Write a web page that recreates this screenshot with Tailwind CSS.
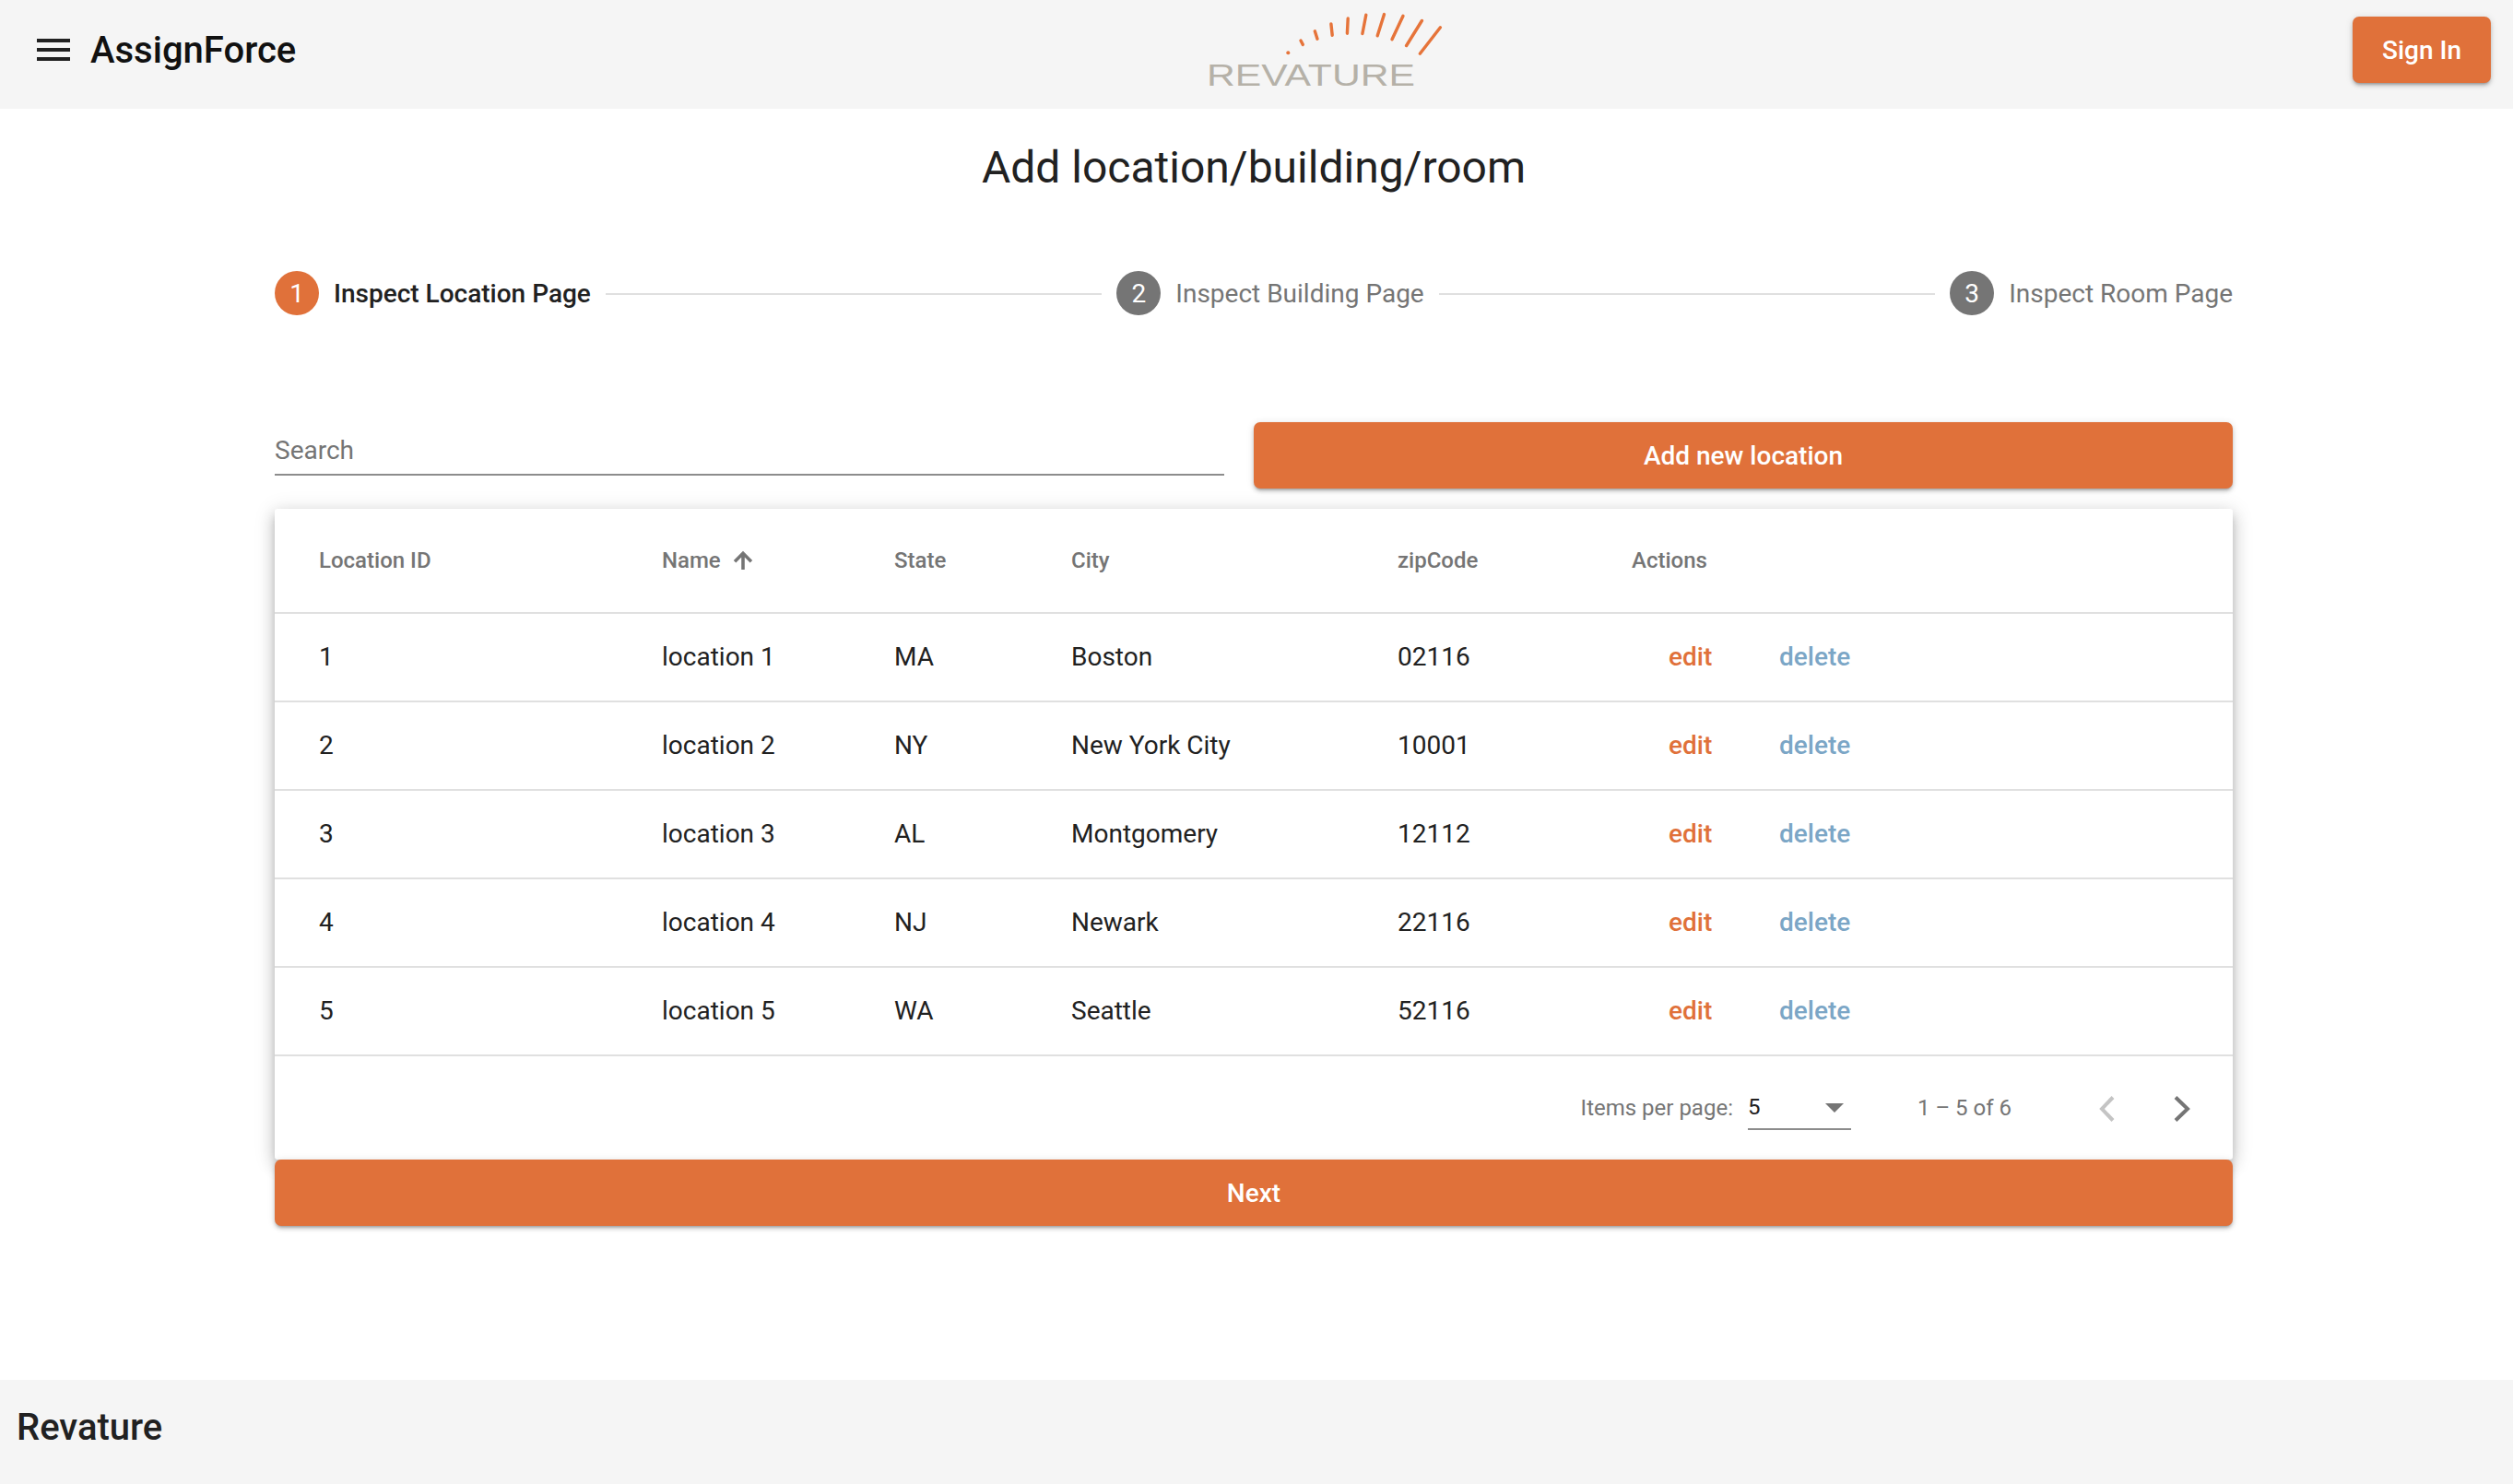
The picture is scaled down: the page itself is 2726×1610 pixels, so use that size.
<!DOCTYPE html>
<html lang="en">
<head>
    <meta charset="UTF-8">
    <meta name="viewport" content="width=device-width, initial-scale=1.0">
    <title>AssignForce</title>
    <script src="https://cdn.jsdelivr.net/npm/@tailwindcss/browser@4"></script>
</head>
<body class="bg-white font-['Roboto',sans-serif] text-[#212121]">
<div class="flex flex-col h-[1610px] overflow-hidden">

    <!-- Toolbar -->
    <header class="h-[118px] shrink-0 bg-[#f5f5f5] flex items-start">
        <div class="w-[1300px] h-[108px] shrink-0 flex items-center pl-[40px]">
            <svg class="w-[36px] h-[24px]" viewBox="0 0 36 24" fill="#212121">
                <rect y="0" width="36" height="4"></rect>
                <rect y="10" width="36" height="4"></rect>
                <rect y="20" width="36" height="4"></rect>
            </svg>
            <span class="ml-[22px] mt-[1px] text-[40px] leading-none font-medium text-[#111]">AssignForce</span>
        </div>
        <svg class="w-[270px] h-[100px] shrink-0" viewBox="1300 0 270 100" fill="none" stroke="#e6743a" stroke-width="3.4" stroke-linecap="round">
            <circle cx="1397.3" cy="57.3" r="2" fill="#e6743a" stroke="none"></circle>
            <line x1="1411" y1="44" x2="1413.3" y2="48.4"></line>
            <line x1="1426.3" y1="33.8" x2="1429" y2="42.2"></line>
            <line x1="1443.9" y1="26" x2="1445.2" y2="38.2"></line>
            <line x1="1462.2" y1="20" x2="1461.4" y2="36.2"></line>
            <line x1="1481.8" y1="16.2" x2="1477.9" y2="36.5"></line>
            <line x1="1501.5" y1="15.5" x2="1494.2" y2="38.8"></line>
            <line x1="1522" y1="17.2" x2="1510" y2="42.8"></line>
            <line x1="1542.4" y1="22.5" x2="1525.6" y2="49.5"></line>
            <line x1="1562.4" y1="29.8" x2="1540.3" y2="58.2"></line>
            <text x="1309" y="93" textLength="226" lengthAdjust="spacingAndGlyphs" font-family="Liberation Sans" font-size="33" fill="#b5b1a8" stroke="none">REVATURE</text>
        </svg>
        <button class="ml-auto mt-[18px] mr-[24px] w-[150px] h-[72px] pt-[2px] rounded-[7px] bg-[#e0713a] text-white text-[28px] font-medium shadow-[0_3px_3px_-2px_rgba(0,0,0,.25),0_3px_4px_0_rgba(0,0,0,.16),0_1px_8px_0_rgba(0,0,0,.12)]">Sign In</button>
    </header>

    <main class="flex-1">
        <h1 class="h-[128px] pr-[6px] flex items-center justify-center text-[48px] font-normal">Add location/building/room</h1>

        <div class="w-[2124px] ml-[298px]">
            <!-- Stepper -->
            <div class="mt-[48px] h-[48px] flex items-center text-[28px] text-[#757575]">
                <span class="w-[48px] h-[48px] pt-[1px] rounded-full bg-[#e0713a] text-white flex items-center justify-center">1</span>
                <span class="ml-[16px] mt-[1px] font-medium text-[#212121]">Inspect Location Page</span>
                <span class="flex-1 mx-[16px] mt-[1px] h-[2px] bg-[#e0e0e0]"></span>
                <span class="w-[48px] h-[48px] pt-[1px] rounded-full bg-[#757575] text-white flex items-center justify-center">2</span>
                <span class="ml-[16px] mt-[1px]">Inspect Building Page</span>
                <span class="flex-1 mx-[16px] mt-[1px] h-[2px] bg-[#e0e0e0]"></span>
                <span class="w-[48px] h-[48px] pt-[1px] rounded-full bg-[#757575] text-white flex items-center justify-center">3</span>
                <span class="ml-[16px] mt-[1px]">Inspect Room Page</span>
            </div>

            <!-- Search + add -->
            <div class="mt-[116px] flex items-start justify-between">
                <input class="w-[1030px] h-[58px] pt-[4px] border-b-2 border-[#8c8c8c] text-[28px] outline-none placeholder:text-[#757575]" placeholder="Search">
                <button class="w-[1062px] h-[72px] pt-[1px] rounded-[7px] bg-[#e0713a] text-white text-[28px] font-medium shadow-[0_3px_3px_-2px_rgba(0,0,0,.25),0_3px_4px_0_rgba(0,0,0,.16),0_1px_8px_0_rgba(0,0,0,.12)]">Add new location</button>
            </div>

            <!-- Table -->
            <div class="mt-[22px] bg-white rounded-[3px] shadow-[0_5px_9px_-3px_rgba(0,0,0,.2),0_8px_16px_1px_rgba(0,0,0,.14),0_3px_22px_2px_rgba(0,0,0,.12)]">
                <div class="h-[114px] pl-[48px] border-b-2 border-[#e0e0e0] grid grid-cols-[372px_252px_192px_354px_254px_1fr] items-center text-[24px] font-medium text-[#757575]">
                    <span>Location ID</span>
                    <span class="flex items-center">Name
                        <svg class="ml-[10px] w-[28px] h-[28px]" viewBox="0 0 24 24" fill="#757575" stroke="#757575" stroke-width="1"><path d="M4 12l1.41 1.41L11 7.83V20h2V7.83l5.58 5.59L20 12l-8-8-8 8z"></path></svg>
                    </span>
                    <span>State</span>
                    <span>City</span>
                    <span>zipCode</span>
                    <span>Actions</span>
                </div>

                <div class="h-[96px] pl-[48px] border-b-2 border-[#e0e0e0] grid grid-cols-[372px_252px_192px_354px_254px_1fr] items-center text-[28px]">
                    <span>1</span><span>location 1</span><span>MA</span><span>Boston</span><span>02116</span>
                    <span class="flex font-medium"><span class="ml-[40px] w-[120px] text-[#e0713a]">edit</span><span class="text-[#7ba6c6]">delete</span></span>
                </div>
                <div class="h-[96px] pl-[48px] border-b-2 border-[#e0e0e0] grid grid-cols-[372px_252px_192px_354px_254px_1fr] items-center text-[28px]">
                    <span>2</span><span>location 2</span><span>NY</span><span>New York City</span><span>10001</span>
                    <span class="flex font-medium"><span class="ml-[40px] w-[120px] text-[#e0713a]">edit</span><span class="text-[#7ba6c6]">delete</span></span>
                </div>
                <div class="h-[96px] pl-[48px] border-b-2 border-[#e0e0e0] grid grid-cols-[372px_252px_192px_354px_254px_1fr] items-center text-[28px]">
                    <span>3</span><span>location 3</span><span>AL</span><span>Montgomery</span><span>12112</span>
                    <span class="flex font-medium"><span class="ml-[40px] w-[120px] text-[#e0713a]">edit</span><span class="text-[#7ba6c6]">delete</span></span>
                </div>
                <div class="h-[96px] pl-[48px] border-b-2 border-[#e0e0e0] grid grid-cols-[372px_252px_192px_354px_254px_1fr] items-center text-[28px]">
                    <span>4</span><span>location 4</span><span>NJ</span><span>Newark</span><span>22116</span>
                    <span class="flex font-medium"><span class="ml-[40px] w-[120px] text-[#e0713a]">edit</span><span class="text-[#7ba6c6]">delete</span></span>
                </div>
                <div class="h-[96px] pl-[48px] border-b-2 border-[#e0e0e0] grid grid-cols-[372px_252px_192px_354px_254px_1fr] items-center text-[28px]">
                    <span>5</span><span>location 5</span><span>WA</span><span>Seattle</span><span>52116</span>
                    <span class="flex font-medium"><span class="ml-[40px] w-[120px] text-[#e0713a]">edit</span><span class="text-[#7ba6c6]">delete</span></span>
                </div>

                <!-- Paginator -->
                <div class="h-[112px] flex items-center justify-end text-[24px] text-[#757575] pr-[46px]">
                    <span>Items per page:</span>
                    <div class="ml-[16px] w-[112px] h-[46px] mt-[2px] pt-[5px] border-b-2 border-[#8c8c8c] flex items-start justify-between pr-[8px]">
                        <span class="text-[#212121] leading-[32px]">5</span>
                        <span class="mt-[12px] w-0 h-0 border-x-[10px] border-x-transparent border-t-[10px] border-t-[#757575]"></span>
                    </div>
                    <span class="ml-[72px]">1 – 5 of 6</span>
                    <svg class="ml-[95px] mt-[2px] w-[17px] h-[28px]" viewBox="0 0 17 28" fill="none" stroke="#c4c4c4" stroke-width="4"><path d="M15 1.5L3 14l12 12.5"></path></svg>
                    <svg class="ml-[64px] mt-[2px] w-[18px] h-[28px]" viewBox="0 0 18 28" fill="none" stroke="#757575" stroke-width="4"><path d="M2 1.5L15 14 2 26.5"></path></svg>
                </div>
            </div>

            <button class="block w-full h-[72px] pt-[1px] rounded-[7px] bg-[#e0713a] text-white text-[28px] font-medium shadow-[0_3px_3px_-2px_rgba(0,0,0,.25),0_3px_4px_0_rgba(0,0,0,.16),0_1px_8px_0_rgba(0,0,0,.12)] relative">Next</button>
        </div>
    </main>

    <footer class="h-[113px] pb-[10px] shrink-0 bg-[#f5f5f5] flex items-center pl-[18px] text-[40px] font-medium">Revature</footer>
</div>
</body>
</html>
